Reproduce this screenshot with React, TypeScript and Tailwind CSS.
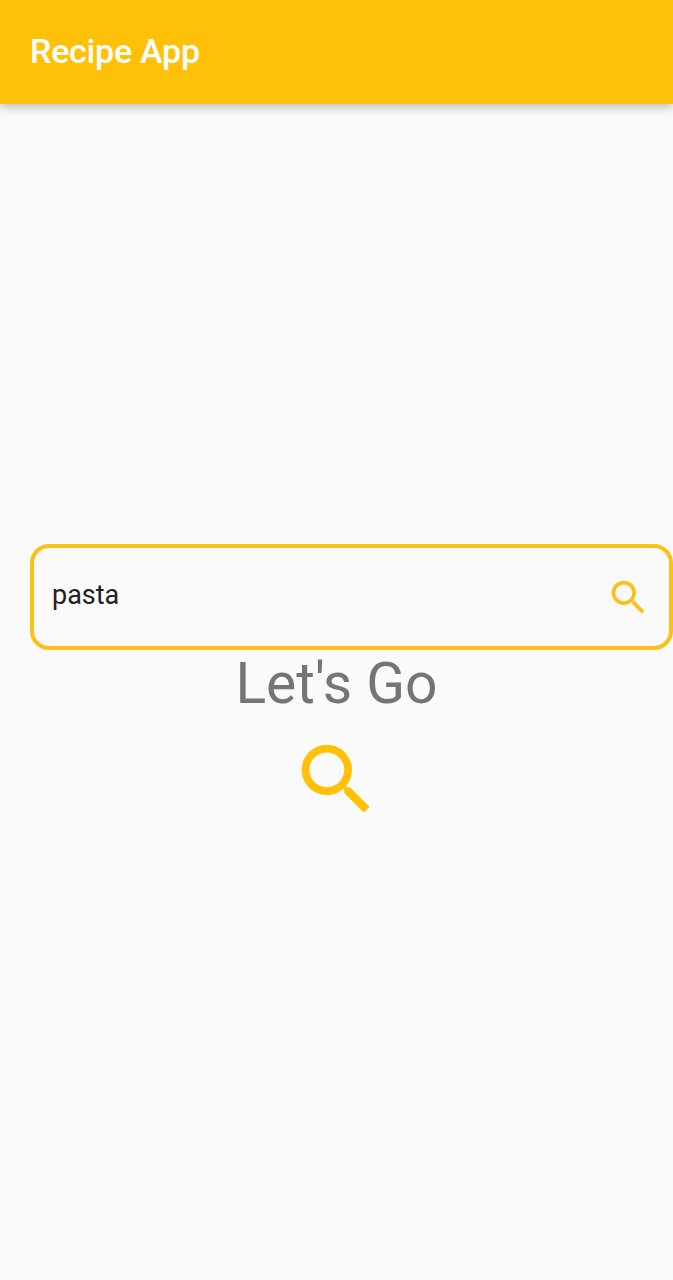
import React from "react";

function SearchIcon({ className }: { className: string }) {
  return (
    <svg viewBox="0 0 24 24" fill="currentColor" className={className} aria-hidden="true">
      <path d="M15.5 14h-.79l-.28-.27C15.41 12.59 16 11.11 16 9.5 16 5.91 13.09 3 9.5 3S3 5.91 3 9.5 5.91 16 9.5 16c1.61 0 3.09-.59 4.23-1.57l.27.28v.79l5 4.99L20.49 19l-4.99-5zm-6 0C7.01 14 5 11.99 5 9.5S7.01 5 9.5 5 14 7.01 14 9.5 11.99 14 9.5 14z" />
    </svg>
  );
}

export default function App() {
  return (
    <div className="flex h-[1280px] w-full flex-col overflow-hidden bg-[#fafafa] font-['Roboto',sans-serif]">
      <header className="flex h-[104px] shrink-0 items-center bg-[#ffc107] pb-0.5 pl-[30px] shadow-[0_3px_10px_rgba(0,0,0,0.26)]">
        <h1 className="text-[34px] leading-10 font-medium tracking-[-0.25px] text-white">Recipe App</h1>
      </header>
      <main className="flex flex-1 flex-col items-center pt-[440px]">
        <div className="w-full pl-[30px]">
          <div className="flex h-[106px] w-full items-center justify-between rounded-[19px] border-4 border-[#fcc018] pr-[18px] pl-[18px]">
            <span className="pb-1 text-[27px] leading-8 text-[#212121]">pasta</span>
            <SearchIcon className="size-[45px] text-[#fcc018]" />
          </div>
        </div>
        <p className="text-[57px] leading-[67px] text-[#757575]">Let's Go</p>
        <button type="button" aria-label="Search" className="mt-4 text-[#ffc107]">
          <SearchIcon className="size-[93px]" />
        </button>
      </main>
    </div>
  );
}
